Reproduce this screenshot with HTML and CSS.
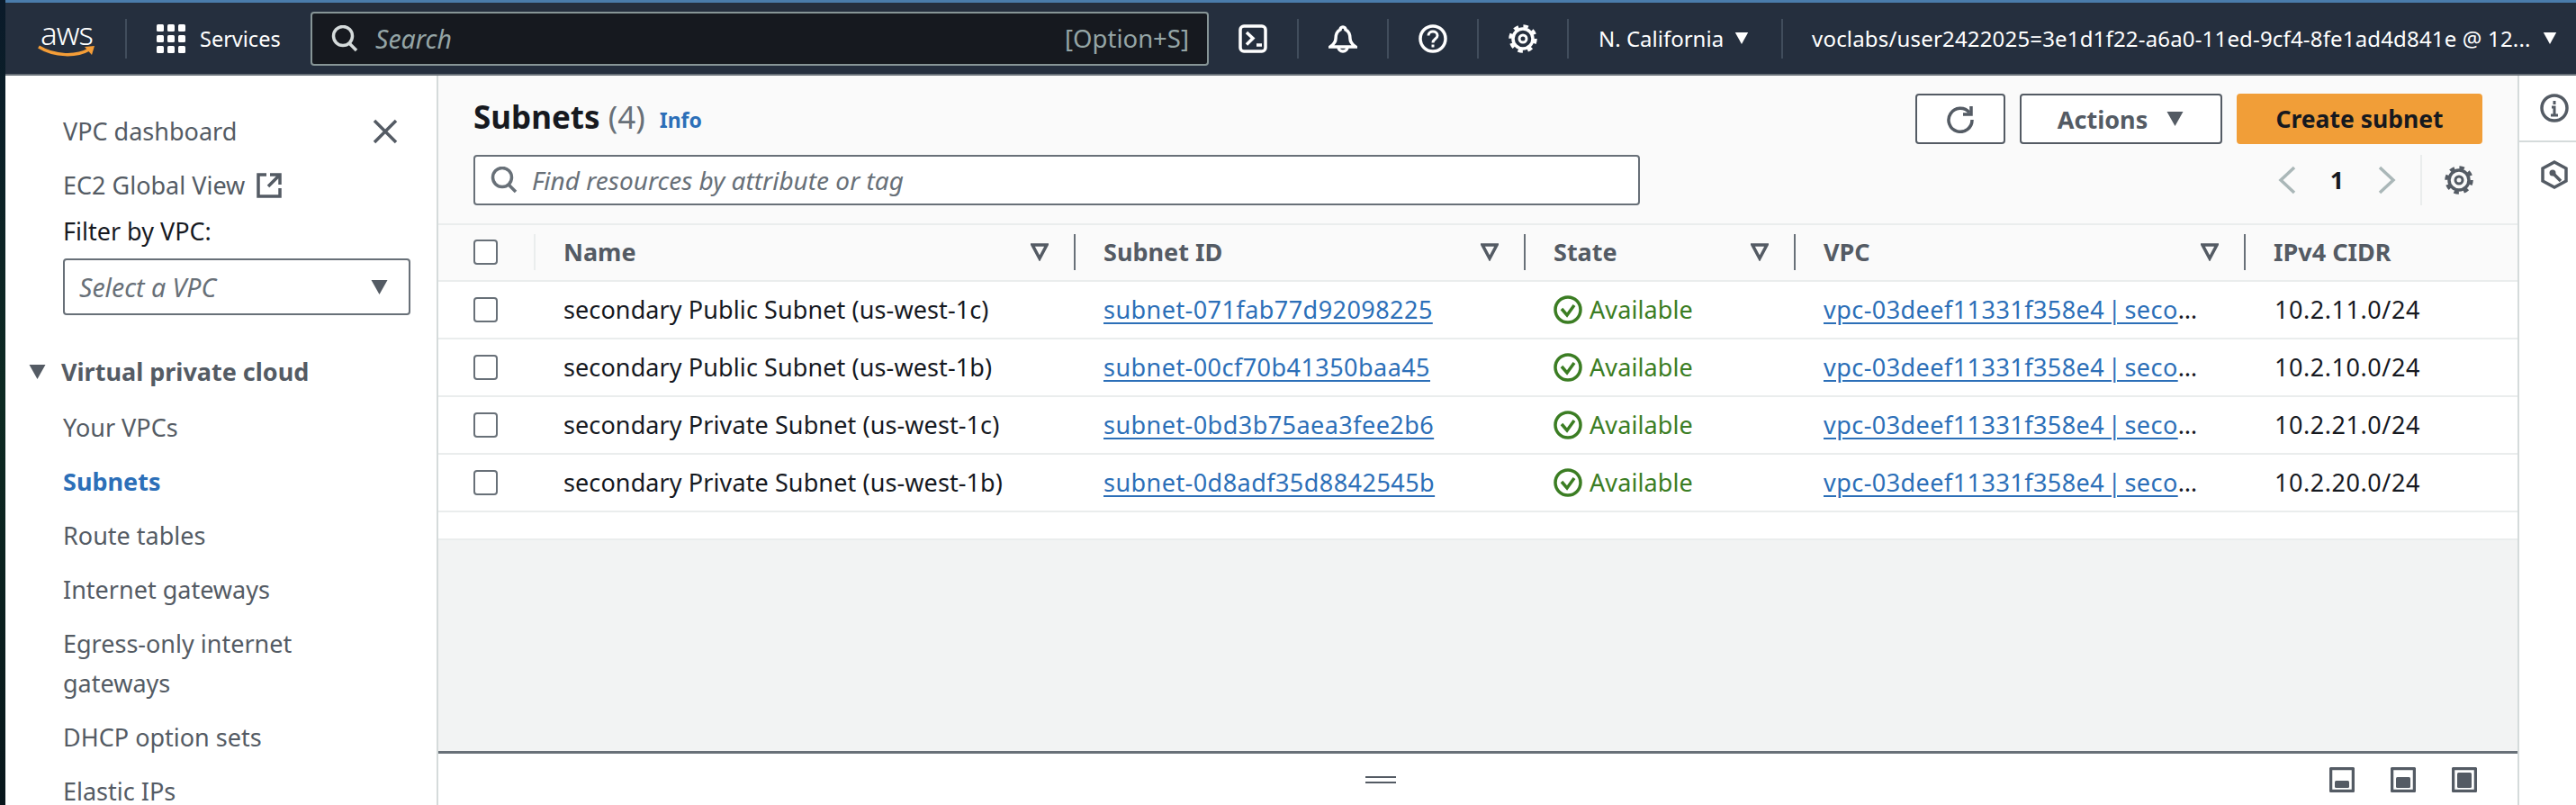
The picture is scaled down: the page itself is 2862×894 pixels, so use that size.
FILE: index.html
```html
<!DOCTYPE html>
<html lang="en">
<head>
    <meta charset="UTF-8">
    <title>Subnets | VPC Console</title>
    <link rel="stylesheet" href="styles.css">
</head>
<body>
    <svg class="defs" width="0" height="0">
        <symbol id="search" viewBox="0 0 30 30">
            <circle cx="13" cy="12" r="10.5" fill="none" stroke="currentColor" stroke-width="3.5"/>
            <path d="M20 20l8 8" fill="none" stroke="currentColor" stroke-width="3.5"/>
        </symbol>
        <symbol id="gear" viewBox="0 0 32 32">
            <circle cx="16" cy="16" r="11" fill="none" stroke="currentColor" stroke-width="3.5"/>
            <circle cx="16" cy="16" r="14" fill="none" stroke="currentColor" stroke-width="3.5" stroke-dasharray="5.5 5.5"/>
            <circle cx="16" cy="16" r="4" fill="none" stroke="currentColor" stroke-width="3"/>
        </symbol>
        <symbol id="caret" viewBox="0 0 20 16">
            <path d="M1 0h18l-9 16z" fill="currentColor"/>
        </symbol>
        <symbol id="filter" viewBox="0 0 20 20">
            <path d="M2 2h16l-8 15z" fill="none" stroke="currentColor" stroke-width="3.5"/>
        </symbol>
        <symbol id="ok" viewBox="0 0 32 32">
            <circle cx="16" cy="16" r="14" fill="none" stroke="currentColor" stroke-width="3.5"/>
            <path d="M9 15l6 7 8-11" fill="none" stroke="currentColor" stroke-width="3.5"/>
        </symbol>
    </svg>

    <div class="page">
        <div class="shell">
            <!-- Top navigation -->
            <header class="topbar">
                <div class="logo">
                    <span class="logo-text">aws</span>
                    <svg class="smile" viewBox="0 0 64 14">
                        <path d="M1 2c18 11 42 11 56 3" fill="none" stroke="#f49d37" stroke-width="3.5"/>
                        <path d="M52 2l11-1-3 10z" fill="#f49d37"/>
                    </svg>
                </div>
                <div class="logo-divider"></div>
                <svg class="grid-icon" viewBox="0 0 32 32" fill="#fff">
                    <rect x="0" y="0" width="8" height="8" rx="1.5"/><rect x="12" y="0" width="8" height="8" rx="1.5"/><rect x="24" y="0" width="8" height="8" rx="1.5"/>
                    <rect x="0" y="12" width="8" height="8" rx="1.5"/><rect x="12" y="12" width="8" height="8" rx="1.5"/><rect x="24" y="12" width="8" height="8" rx="1.5"/>
                    <rect x="0" y="24" width="8" height="8" rx="1.5"/><rect x="12" y="24" width="8" height="8" rx="1.5"/><rect x="24" y="24" width="8" height="8" rx="1.5"/>
                </svg>
                <span class="services">Services</span>
                <div class="global-search">
                    <svg class="icon-search"><use href="#search"/></svg>
                    <span class="search-text">Search</span>
                    <span class="search-key">[Option+S]</span>
                </div>
                <div class="nav-cell">
                    <svg class="nav-icon" viewBox="0 0 32 32" fill="none" stroke="#fff" stroke-width="3.5">
                        <rect x="2" y="2" width="28" height="28" rx="4"/>
                        <path d="M9 9l7 6.500-7 7M20 23h6"/>
                    </svg>
                </div>
                <div class="nav-cell">
                    <svg class="nav-icon" viewBox="0 0 32 32" fill="none" stroke="#fff" stroke-width="3.5">
                        <path d="M16 3c-2 0-3 1.500-3 3-4 2-5 6-5 10 0 4-2 6-6 9h28c-4-3-6-5-6-9 0-4-1-8-5-10 0-1.500-1-3-3-3z"/>
                        <path d="M11 25a5 5 0 0 0 10 0"/>
                    </svg>
                </div>
                <div class="nav-cell">
                    <svg class="nav-icon" viewBox="0 0 32 32" fill="none" stroke="#fff" stroke-width="3.500">
                        <circle cx="16" cy="16" r="14"/>
                        <path d="M11 12.500c0-3 2.500-4.500 5-4.500s5 1.500 5 4.500c0 4-5 3.500-5 8" stroke-width="3"/>
                        <path d="M16 22.500v3" stroke-width="3"/>
                    </svg>
                </div>
                <div class="nav-cell">
                    <svg class="nav-icon"><use href="#gear"/></svg>
                </div>
                <div class="nav-cell nav-region">
                    <span>N. California</span>
                    <svg class="nav-caret"><use href="#caret"/></svg>
                </div>
                <div class="nav-user">
                    <span class="nav-user-name">voclabs/user2422025=3e1d1f22-a6a0-11ed-9cf4-8fe1ad4d841e @ 12...</span>
                    <svg class="nav-caret"><use href="#caret"/></svg>
                </div>
            </header>

            <div class="content">
                <!-- Side navigation -->
                <nav class="sidebar">
                    <div class="side-top">
                        <a class="side-link">VPC dashboard</a>
                        <svg class="side-close" viewBox="0 0 28 28" fill="none" stroke="#545b64" stroke-width="3.500">
                            <path d="M2 2l24 24M26 2L2 26"/>
                        </svg>
                    </div>
                    <div class="side-ec2">
                        <a class="side-link">EC2 Global View</a>
                        <svg class="side-external" viewBox="0 0 28 28" fill="none" stroke="#545b64" stroke-width="3.500">
                            <path d="M11 2H2v24h24v-9M15 2h11v11M26 2L13 15"/>
                        </svg>
                    </div>
                    <div class="side-filter-label">Filter by VPC:</div>
                    <div class="side-select">
                        <span>Select a VPC</span>
                        <svg class="select-caret"><use href="#caret"/></svg>
                    </div>
                    <div class="side-section">
                        <svg class="section-caret"><use href="#caret"/></svg>
                        <span>Virtual private cloud</span>
                    </div>
                    <ul class="side-list">
                        <li>Your VPCs</li>
                        <li class="active">Subnets</li>
                        <li>Route tables</li>
                        <li>Internet gateways</li>
                        <li>Egress-only internet gateways</li>
                        <li>DHCP option sets</li>
                        <li>Elastic IPs</li>
                    </ul>
                </nav>

                <main class="main">
                    <div class="panel-head">
                        <div class="title-row">
                            <h1 class="title">Subnets <span class="count">(4)</span></h1>
                            <a class="info">Info</a>
                            <div class="actions">
                                <button class="btn btn-icon">
                                    <svg class="refresh" viewBox="0 0 32 32" fill="none" stroke="#545b64" stroke-width="3.500">
                                        <path d="M26 9a13 13 0 1 0 3 8"/>
                                        <path d="M28 2v9h-9"/>
                                    </svg>
                                </button>
                                <button class="btn btn-actions">Actions <svg class="btn-caret"><use href="#caret"/></svg></button>
                                <button class="btn btn-primary">Create subnet</button>
                            </div>
                        </div>
                        <div class="filter-row">
                            <div class="filter-input">
                                <svg class="icon-search"><use href="#search"/></svg>
                                <span>Find resources by attribute or tag</span>
                            </div>
                            <div class="pager">
                                <svg class="pager-arrow" viewBox="0 0 20 32"><path d="M18 2L3 16l15 14" fill="none" stroke="#aab7b8" stroke-width="3.500"/></svg>
                                <span class="pager-num">1</span>
                                <svg class="pager-arrow" viewBox="0 0 20 32"><path d="M2 2l15 14L2 30" fill="none" stroke="#aab7b8" stroke-width="3.500"/></svg>
                                <div class="pager-settings">
                                    <svg class="pager-gear"><use href="#gear"/></svg>
                                </div>
                            </div>
                        </div>
                    </div>

                    <div class="table-wrap">
                        <table class="subnets">
                            <colgroup>
                                <col class="col-check"><col class="col-name"><col class="col-id"><col class="col-state"><col class="col-vpc"><col>
                            </colgroup>
                            <thead>
                                <tr>
                                    <th><span class="check"></span></th>
                                    <th><div class="th-inner th-first">Name <svg class="th-filter"><use href="#filter"/></svg></div></th>
                                    <th><div class="th-inner">Subnet ID <svg class="th-filter"><use href="#filter"/></svg></div></th>
                                    <th><div class="th-inner">State <svg class="th-filter"><use href="#filter"/></svg></div></th>
                                    <th><div class="th-inner">VPC <svg class="th-filter"><use href="#filter"/></svg></div></th>
                                    <th><div class="th-inner">IPv4 CIDR</div></th>
                                </tr>
                            </thead>
                            <tbody>
                                <tr>
                                    <td><span class="check"></span></td>
                                    <td>secondary Public Subnet (us-west-1c)</td>
                                    <td><a class="link">subnet-071fab77d92098225</a></td>
                                    <td><span class="status"><svg class="status-icon"><use href="#ok"/></svg>Available</span></td>
                                    <td><div class="vpc-cell"><a class="link">vpc-03deef11331f358e4 | secondary</a></div></td>
                                    <td class="cidr">10.2.11.0/24</td>
                                </tr>
                                <tr>
                                    <td><span class="check"></span></td>
                                    <td>secondary Public Subnet (us-west-1b)</td>
                                    <td><a class="link">subnet-00cf70b41350baa45</a></td>
                                    <td><span class="status"><svg class="status-icon"><use href="#ok"/></svg>Available</span></td>
                                    <td><div class="vpc-cell"><a class="link">vpc-03deef11331f358e4 | secondary</a></div></td>
                                    <td class="cidr">10.2.10.0/24</td>
                                </tr>
                                <tr>
                                    <td><span class="check"></span></td>
                                    <td>secondary Private Subnet (us-west-1c)</td>
                                    <td><a class="link">subnet-0bd3b75aea3fee2b6</a></td>
                                    <td><span class="status"><svg class="status-icon"><use href="#ok"/></svg>Available</span></td>
                                    <td><div class="vpc-cell"><a class="link">vpc-03deef11331f358e4 | secondary</a></div></td>
                                    <td class="cidr">10.2.21.0/24</td>
                                </tr>
                                <tr>
                                    <td><span class="check"></span></td>
                                    <td>secondary Private Subnet (us-west-1b)</td>
                                    <td><a class="link">subnet-0d8adf35d8842545b</a></td>
                                    <td><span class="status"><svg class="status-icon"><use href="#ok"/></svg>Available</span></td>
                                    <td><div class="vpc-cell"><a class="link">vpc-03deef11331f358e4 | secondary</a></div></td>
                                    <td class="cidr">10.2.20.0/24</td>
                                </tr>
                            </tbody>
                        </table>
                    </div>

                    <div class="panel-empty"></div>

                    <div class="split-bar">
                        <div class="split-handle"></div>
                        <div class="split-icons">
                            <svg class="split-icon" viewBox="0 0 28 28"><rect x="1.500" y="1.500" width="25" height="25" rx="1" fill="none" stroke="#545b64" stroke-width="3.500"/><rect x="6" y="15" width="16" height="8" rx="1.500" fill="#545b64"/></svg>
                            <svg class="split-icon" viewBox="0 0 28 28"><rect x="1.500" y="1.500" width="25" height="25" rx="1" fill="none" stroke="#545b64" stroke-width="3.500"/><rect x="6" y="11" width="16" height="12" rx="1.500" fill="#545b64"/></svg>
                            <svg class="split-icon" viewBox="0 0 28 28"><rect x="1.500" y="1.500" width="25" height="25" rx="1" fill="none" stroke="#545b64" stroke-width="3.500"/><rect x="6" y="6" width="16" height="17" rx="1.500" fill="#545b64"/></svg>
                        </div>
                    </div>
                </main>

                <!-- Tools rail -->
                <aside class="tools">
                    <div class="tools-item">
                        <svg class="tools-icon" viewBox="0 0 32 32" fill="none" stroke="#545b64" stroke-width="3.500">
                            <circle cx="16" cy="16" r="14"/>
                            <path d="M16 8v4M13 15h3v9M12 24h8" stroke-width="3"/>
                        </svg>
                    </div>
                    <div class="tools-item tools-item-second">
                        <svg class="tools-icon" viewBox="0 0 32 32" fill="none" stroke="#545b64" stroke-width="3.500">
                            <path d="M16 2l13 7v14l-13 7-13-7V9z"/>
                            <circle cx="14" cy="14" r="3.500" fill="#545b64" stroke="none"/>
                            <path d="M15 15l8 8" stroke-width="3.500"/>
                        </svg>
                    </div>
                </aside>
            </div>
        </div>
    </div>
</body>
</html>
```

FILE: styles.css
```css
/* General */
* {
    box-sizing: border-box;
}

html, body {
    margin: 0;
    padding: 0;
    width: 2862px;
    height: 894px;
    overflow: hidden;
}

body {
    font-family: "Noto Sans", "Liberation Sans", sans-serif;
    font-size: 27px;
    line-height: 44px;
    color: #16191f;
}

.defs {
    position: absolute;
}

svg {
    display: block;
    flex: none;
}

.page {
    height: 894px;
    padding-left: 6px;
    background: linear-gradient(#0a1a2a, #0d2a22 50%, #08161c);
}

.shell {
    height: 100%;
    display: flex;
    flex-direction: column;
}

/* Top navigation */
.topbar {
    height: 84px;
    flex: none;
    display: flex;
    align-items: center;
    background-color: #252f3e;
    border-top: 3px solid #4a7cab;
    border-bottom: 2px solid #687078;
    color: #fff;
    font-size: 24px;
}

.logo {
    width: 64px;
    height: 40px;
    margin-left: 36px;
}

.logo-text {
    display: block;
    font-size: 35px;
    font-weight: 300;
    line-height: 28px;
    text-align: center;
    letter-spacing: -1px;
}

.smile {
    width: 64px;
    height: 14px;
    margin-top: -1px;
}

.logo-divider {
    width: 2px;
    height: 44px;
    margin-left: 33px;
    background-color: #414d5c;
}

.grid-icon {
    width: 32px;
    height: 32px;
    margin-left: 33px;
}

.services {
    margin-left: 16px;
    width: 89px;
    font-size: 23.5px;
    white-space: nowrap;
}

.global-search {
    width: 998px;
    height: 60px;
    margin-left: 34px;
    padding: 0 20px 0 21px;
    display: flex;
    align-items: center;
    background-color: #16191f;
    border: 2px solid #879596;
    border-radius: 4px;
    color: #95a5a6;
    font-size: 27.5px;
}

.global-search .icon-search {
    color: #d5dbdb;
    margin-right: 19px;
}

.icon-search {
    width: 30px;
    height: 30px;
}

.search-text {
    font-style: italic;
    font-size: 28.500px;
}

.search-key {
    margin-left: auto;
}

.nav-cell {
    height: 44px;
    padding: 0 33px;
    display: flex;
    align-items: center;
    border-right: 2px solid #414d5c;
}

.nav-icon {
    width: 32px;
    height: 32px;
}

.nav-region {
    gap: 12px;
    padding-right: 36px;
}

.nav-user {
    padding-left: 32px;
    display: flex;
    align-items: center;
    gap: 13px;
    white-space: nowrap;
}

.nav-user-name {
    letter-spacing: 0.17px;
}

.nav-caret {
    width: 16px;
    height: 13px;
}

.content {
    flex: 1;
    min-height: 0;
    display: flex;
}

/* Side navigation */
.sidebar {
    width: 481px;
    flex: none;
    padding: 40px 0 0 64px;
    background-color: #fff;
    border-right: 2px solid #d5dbdb;
    color: #545b64;
    overflow: hidden;
}

.side-top {
    display: flex;
    align-items: center;
    justify-content: space-between;
    padding-right: 43px;
}

.side-close {
    width: 28px;
    height: 28px;
}

.side-ec2 {
    margin-top: 16px;
    display: flex;
    align-items: center;
    gap: 13px;
}

.side-external {
    width: 28px;
    height: 28px;
}

.side-filter-label {
    margin-top: 7px;
    color: #16191f;
}

.side-select {
    width: 386px;
    height: 63px;
    margin-top: 8px;
    padding: 0 22px 0 16px;
    display: flex;
    align-items: center;
    justify-content: space-between;
    border: 2px solid #687078;
    border-radius: 4px;
    color: #687078;
    font-size: 28.500px;
    font-style: italic;
}

.select-caret {
    width: 21px;
    height: 16px;
    color: #545b64;
}

.side-section {
    margin: 41px 0 0 -39px;
    display: flex;
    align-items: center;
    gap: 16px;
    font-weight: 700;
}

.section-caret {
    width: 21px;
    height: 16px;
}

.side-list {
    list-style: none;
    margin: 18px 0 0;
    padding: 0 40px 0 0;
    display: flex;
    flex-direction: column;
    gap: 16px;
}

.side-list .active {
    color: #2c6fb8;
    font-weight: 700;
}

/* Main panel */
.main {
    flex: 1;
    min-width: 0;
    display: flex;
    flex-direction: column;
    background-color: #f2f3f3;
}

.panel-head {
    height: 166px;
    flex: none;
    padding: 20px 39px 0 39px;
    background-color: #fafafa;
    border-bottom: 2px solid #eaeded;
}

.title-row {
    display: flex;
    align-items: flex-start;
}

.title {
    margin: 0;
    font-size: 35px;
    line-height: 52px;
    font-weight: 700;
}

.count {
    color: #687078;
    font-weight: 400;
}

.info {
    margin: 9px 0 0 16px;
    font-size: 23px;
    line-height: 40px;
    font-weight: 700;
    color: #2c6fb8;
}

.actions {
    margin-left: auto;
    display: flex;
    gap: 16px;
}

.btn {
    height: 56px;
    padding: 0;
    display: flex;
    align-items: center;
    justify-content: center;
    border: 2px solid #545b64;
    border-radius: 4px;
    background-color: #fff;
    color: #545b64;
    font-family: inherit;
    font-size: 27px;
    font-weight: 700;
}

.btn-icon {
    width: 100px;
}

.refresh {
    width: 32px;
    height: 32px;
}

.btn-actions {
    width: 225px;
    gap: 20px;
}

.btn-caret {
    width: 21px;
    height: 16px;
}

.btn-primary {
    width: 273px;
    background-color: #f19e38;
    border-color: #f19e38;
    color: #16191f;
    font-size: 26.500px;
}

.filter-row {
    margin-top: 12px;
    display: flex;
}

.filter-input {
    width: 1296px;
    height: 56px;
    padding: 0 17px;
    display: flex;
    align-items: center;
    gap: 16px;
    background-color: #fff;
    border: 2px solid #687078;
    border-radius: 4px;
    color: #687078;
    font-size: 28px;
    font-style: italic;
}

.pager {
    margin-left: auto;
    display: flex;
    align-items: center;
    height: 56px;
}

.pager-arrow {
    width: 20px;
    height: 32px;
}

.pager-num {
    width: 91px;
    text-align: center;
    font-weight: 700;
}

.pager-settings {
    height: 56px;
    margin-left: 27px;
    padding: 0 10px 0 25px;
    display: flex;
    align-items: center;
    border-left: 2px solid #eaeded;
}

.pager-gear {
    width: 32px;
    height: 32px;
    color: #545b64;
}

/* Table */
.table-wrap {
    flex: none;
    padding-bottom: 29px;
    background-color: #fff;
    border-bottom: 2px solid #eaeded;
}

.subnets {
    width: 100%;
    table-layout: fixed;
    border-collapse: collapse;
}

.col-check {
    width: 106px;
}

.col-name {
    width: 600px;
}

.col-id {
    width: 500px;
}

.col-state {
    width: 300px;
}

.col-vpc {
    width: 500px;
}

th {
    height: 62px;
    padding: 0 0 2px;
    text-align: left;
    background-color: #fafafa;
    border-bottom: 2px solid #eaeded;
    color: #545b64;
    font-weight: 700;
}

td {
    height: 64px;
    padding: 0 0 0 33px;
    border-bottom: 2px solid #eaeded;
    letter-spacing: 0.1px;
    white-space: nowrap;
}

th:first-child, td:first-child {
    padding-left: 39px;
}

.check {
    display: block;
    width: 27px;
    height: 28px;
    background-color: #fff;
    border: 2px solid #687078;
    border-radius: 4px;
}

.th-inner {
    height: 40px;
    padding: 0 28px 0 31px;
    display: flex;
    align-items: center;
    justify-content: space-between;
    border-left: 2px solid #687078;
}

.th-first {
    border-left-color: #eaeded;
}

.th-filter {
    width: 20px;
    height: 20px;
}

.link {
    color: #2c6fb8;
    letter-spacing: 0.45px;
    text-decoration: underline;
    text-decoration-thickness: 2px;
    text-underline-offset: 4px;
}

.vpc-cell {
    width: 422px;
    overflow: hidden;
    text-overflow: ellipsis;
    color: #16191f;
    word-spacing: -4px;
}

.cidr {
    padding-left: 34px;
    letter-spacing: 0.55px;
}

.status {
    display: flex;
    align-items: center;
    gap: 8px;
    color: #3b7d23;
}

.status-icon {
    width: 32px;
    height: 32px;
}

.panel-empty {
    flex: 1;
}

/* Split panel bar */
.split-bar {
    height: 60px;
    flex: none;
    display: flex;
    align-items: center;
    background-color: #fff;
    border-top: 3px solid #687078;
    padding-right: 45px;
}

.split-handle {
    width: 34px;
    height: 8px;
    margin-left: 1030px;
    border-top: 2px solid #545b64;
    border-bottom: 2px solid #545b64;
}

.split-icons {
    margin-left: auto;
    display: flex;
    gap: 40px;
}

.split-icon {
    width: 28px;
    height: 28px;
}

/* Tools rail */
.tools {
    width: 65px;
    flex: none;
    background-color: #fff;
    border-left: 2px solid #d5dbdb;
}

.tools-item {
    height: 74px;
    padding: 20px 0 0 23px;
    border-bottom: 2px solid #d5dbdb;
}

.tools-item-second {
    border-bottom: none;
}

.tools-icon {
    width: 32px;
    height: 32px;
}
```
